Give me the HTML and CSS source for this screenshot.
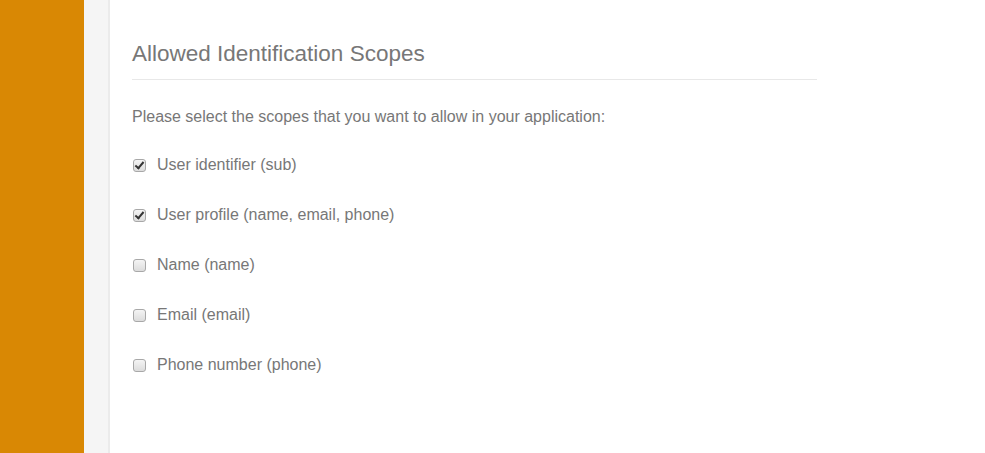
FILE: index.html
```html
<!DOCTYPE html>
<html>
<head>
    <title>Allowed Identification Scopes</title>
    <link rel="stylesheet" href="styles.css">
</head>
<body>
    <div class="layout">
        <div class="sidebar"></div>
        <div class="gutter"></div>
        <div class="main">
            <h2 class="section-title">Allowed Identification Scopes</h2>
            <p class="intro">Please select the scopes that you want to allow in your application:</p>
            <div class="scope-list">
                <label class="scope"><input type="checkbox" checked> User identifier (sub)</label>
                <label class="scope"><input type="checkbox" checked> User profile (name, email, phone)</label>
                <label class="scope"><input type="checkbox"> Name (name)</label>
                <label class="scope"><input type="checkbox"> Email (email)</label>
                <label class="scope"><input type="checkbox"> Phone number (phone)</label>
            </div>
        </div>
    </div>
</body>
</html>
```

FILE: styles.css
```css
html, body {
    margin: 0;
    height: 100%;
}

body {
    font-family: "Liberation Sans", Arial, sans-serif;
    color: #777;
    background: #fff;
}

.layout {
    display: flex;
    height: 100%;
}

.sidebar {
    width: 84px;
    background: #d98804;
}

.gutter {
    width: 24px;
    background: #f5f5f5;
    border-right: 2px solid #ebebeb;
}

.main {
    padding: 40px 0 0 22px;
    width: 685px;
}

.section-title {
    margin: 0;
    font-size: 22.5px;
    font-weight: normal;
    color: #777;
    padding-bottom: 11px;
    border-bottom: 1px solid #e8e8e8;
    line-height: 28px;
}

.intro {
    margin: 27px 0 0;
    font-size: 16px;
    line-height: 20px;
    color: #777;
}

.scope-list {
    display: flex;
    flex-direction: column;
    gap: 30px;
    margin-top: 28px;
}

.scope {
    display: flex;
    align-items: center;
    gap: 11px;
    font-size: 16px;
    line-height: 20px;
    color: #777;
}

.scope input {
    appearance: none;
    -webkit-appearance: none;
    margin: 0 0 0 1px;
    width: 13px;
    height: 13px;
    border: 1px solid #a8a8a8;
    border-radius: 3px;
    background: linear-gradient(#f4f4f4, #dcdcdc);
    position: relative;
}

.scope input:checked::after {
    content: "";
    position: absolute;
    left: 3px;
    top: 0px;
    width: 3px;
    height: 7px;
    border: solid #333;
    border-width: 0 2px 2px 0;
    transform: rotate(40deg);
}
```
